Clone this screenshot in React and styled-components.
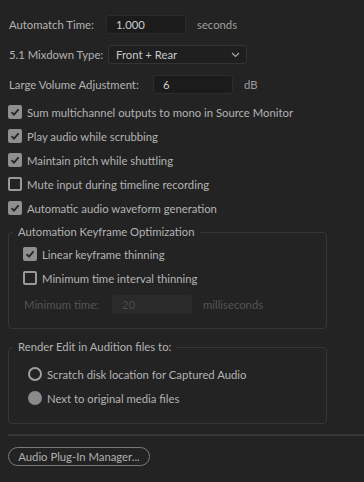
import React from 'react';
import styled, { createGlobalStyle } from 'styled-components';

const GlobalStyle = createGlobalStyle`
  html, body {
    margin: 0;
    padding: 0;
    background: #232323;
  }
  body {
    font-family: Lato, "Noto Sans", sans-serif;
    font-size: 11.3px;
    color: #b3b3b3;
  }
`;

const Page = styled.div`
  width: 364px;
  height: 482px;
  padding-top: 15px;
  box-sizing: border-box;
  overflow: hidden;
`;

const Fields = styled.div`
  display: flex;
  flex-direction: column;
  gap: 11px;
  padding-left: 9px;
`;

const FieldRow = styled.div`
  display: flex;
  align-items: center;
  height: 19px;
`;

const Label = styled.span`
  width: ${({ $w }) => $w}px;
  flex-shrink: 0;
  white-space: nowrap;
  color: ${({ $disabled }) => ($disabled ? '#555555' : '#b3b3b3')};
`;

const Input = styled.div`
  box-sizing: border-box;
  width: ${({ $w }) => $w || 80}px;
  flex-shrink: 0;
  height: 19px;
  border-radius: 3px;
  background: ${({ $disabled }) => ($disabled ? '#2a2a2a' : '#1b1b1b')};
  border: 1px solid ${({ $disabled }) => ($disabled ? '#2a2a2a' : '#2c2c2c')};
  padding-left: 9px;
  display: flex;
  align-items: center;
  color: ${({ $disabled }) => ($disabled ? '#4c4c4c' : '#cfcfcf')};
`;

const Unit = styled.span`
  margin-left: 11px;
  white-space: nowrap;
  color: ${({ $disabled }) => ($disabled ? '#555555' : '#9e9e9e')};
`;

const Select = styled.div`
  box-sizing: border-box;
  width: 139px;
  flex-shrink: 0;
  height: 19px;
  border-radius: 3px;
  background: #1f1f1f;
  border: 1px solid #333;
  padding: 0 6px 0 7px;
  display: flex;
  align-items: center;
  justify-content: space-between;
  color: #c8c8c8;
`;

const Checks = styled.div`
  display: flex;
  flex-direction: column;
  padding-left: ${({ $indent }) => $indent || 8}px;
  margin-top: ${({ $top }) => $top || 0}px;
`;

const CheckRow = styled.div`
  display: flex;
  align-items: center;
  height: 24px;
  gap: 5px;
  white-space: nowrap;
`;

const Box = styled.span`
  box-sizing: border-box;
  width: 14px;
  height: 14px;
  border-radius: 2px;
  flex-shrink: 0;
  display: flex;
  align-items: center;
  justify-content: center;
  background: ${({ $on }) => ($on ? '#8f8f8f' : 'transparent')};
  border: ${({ $on }) => ($on ? 'none' : '2px solid #999')};
`;

const Radio = styled.span`
  box-sizing: border-box;
  width: 14px;
  height: 14px;
  border-radius: 50%;
  flex-shrink: 0;
  background: ${({ $on }) => ($on ? '#8a8a8a' : 'transparent')};
  border: ${({ $on }) => ($on ? 'none' : '2px solid #a0a0a0')};
`;

const Group = styled.fieldset`
  margin: ${({ $top }) => $top}px 37px 0 8px;
  padding: ${({ $pt }) => $pt}px 0 ${({ $pb }) => $pb}px 0;
  border: 1px solid #363636;
  border-radius: 4px;
  min-width: 0;
`;

const Legend = styled.legend`
  margin-left: 4px;
  padding: 0 5px;
  line-height: 16px;
  color: #b3b3b3;
`;

const MinRow = styled.div`
  display: flex;
  align-items: center;
  height: 19px;
  margin-top: 5px;
  padding-left: 15px;
`;

const Divider = styled.hr`
  margin: 10px 0 0 8px;
  border: none;
  border-top: 2px solid #363636;
  height: 0;
`;

const PillButton = styled.button`
  margin: 11px 0 0 8px;
  height: 19px;
  width: 142px;
  box-sizing: border-box;
  border: 1px solid #7a7a7a;
  border-radius: 10px;
  background: transparent;
  color: #b0b0b0;
  font: inherit;
  padding: 0;
  display: flex;
  align-items: center;
  justify-content: center;
`;

const Tick = () => (
  <svg width="10" height="10" viewBox="0 0 10 10">
    <path d="M1.5 5.2 L4 7.6 L8.6 2.4" fill="none" stroke="#262626" strokeWidth="1.8" />
  </svg>
);

const Chevron = () => (
  <svg width="9" height="6" viewBox="0 0 9 6">
    <path d="M1 1 L4.5 4.5 L8 1" fill="none" stroke="#a8a8a8" strokeWidth="1.1" />
  </svg>
);

const Check = ({ on, children }) => (
  <CheckRow>
    <Box $on={on}>{on && <Tick />}</Box>
    <span>{children}</span>
  </CheckRow>
);

const RadioOption = ({ on, children }) => (
  <CheckRow>
    <Radio $on={on} />
    <span>{children}</span>
  </CheckRow>
);

export default function App() {
  return (
    <Page>
      <GlobalStyle />
      <Fields>
        <FieldRow>
          <Label $w={97}>Automatch Time:</Label>
          <Input>1.000</Input>
          <Unit>seconds</Unit>
        </FieldRow>
        <FieldRow>
          <Label $w={99}>5.1 Mixdown Type:</Label>
          <Select>
            <span>Front + Rear</span>
            <Chevron />
          </Select>
        </FieldRow>
        <FieldRow>
          <Label $w={144}>Large Volume Adjustment:</Label>
          <Input>6</Input>
          <Unit>dB</Unit>
        </FieldRow>
      </Fields>

      <Checks $top={6}>
        <Check on>Sum multichannel outputs to mono in Source Monitor</Check>
        <Check on>Play audio while scrubbing</Check>
        <Check on>Maintain pitch while shuttling</Check>
        <Check>Mute input during timeline recording</Check>
        <Check on>Automatic audio waveform generation</Check>
      </Checks>

      <Group $top={4} $pt={2} $pb={14}>
        <Legend>Automation Keyframe Optimization</Legend>
        <Checks $indent={14}>
          <Check on>Linear keyframe thinning</Check>
          <Check>Minimum time interval thinning</Check>
        </Checks>
        <MinRow>
          <Label $w={88} $disabled>Minimum time:</Label>
          <Input $disabled>20</Input>
          <Unit $disabled>milliseconds</Unit>
        </MinRow>
      </Group>

      <Group $top={10} $pt={7} $pb={13}>
        <Legend>Render Edit in Audition files to:</Legend>
        <Checks $indent={19}>
          <RadioOption>Scratch disk location for Captured Audio</RadioOption>
          <RadioOption on>Next to original media files</RadioOption>
        </Checks>
      </Group>

      <Divider />
      <PillButton>Audio Plug-In Manager...</PillButton>
    </Page>
  );
}
